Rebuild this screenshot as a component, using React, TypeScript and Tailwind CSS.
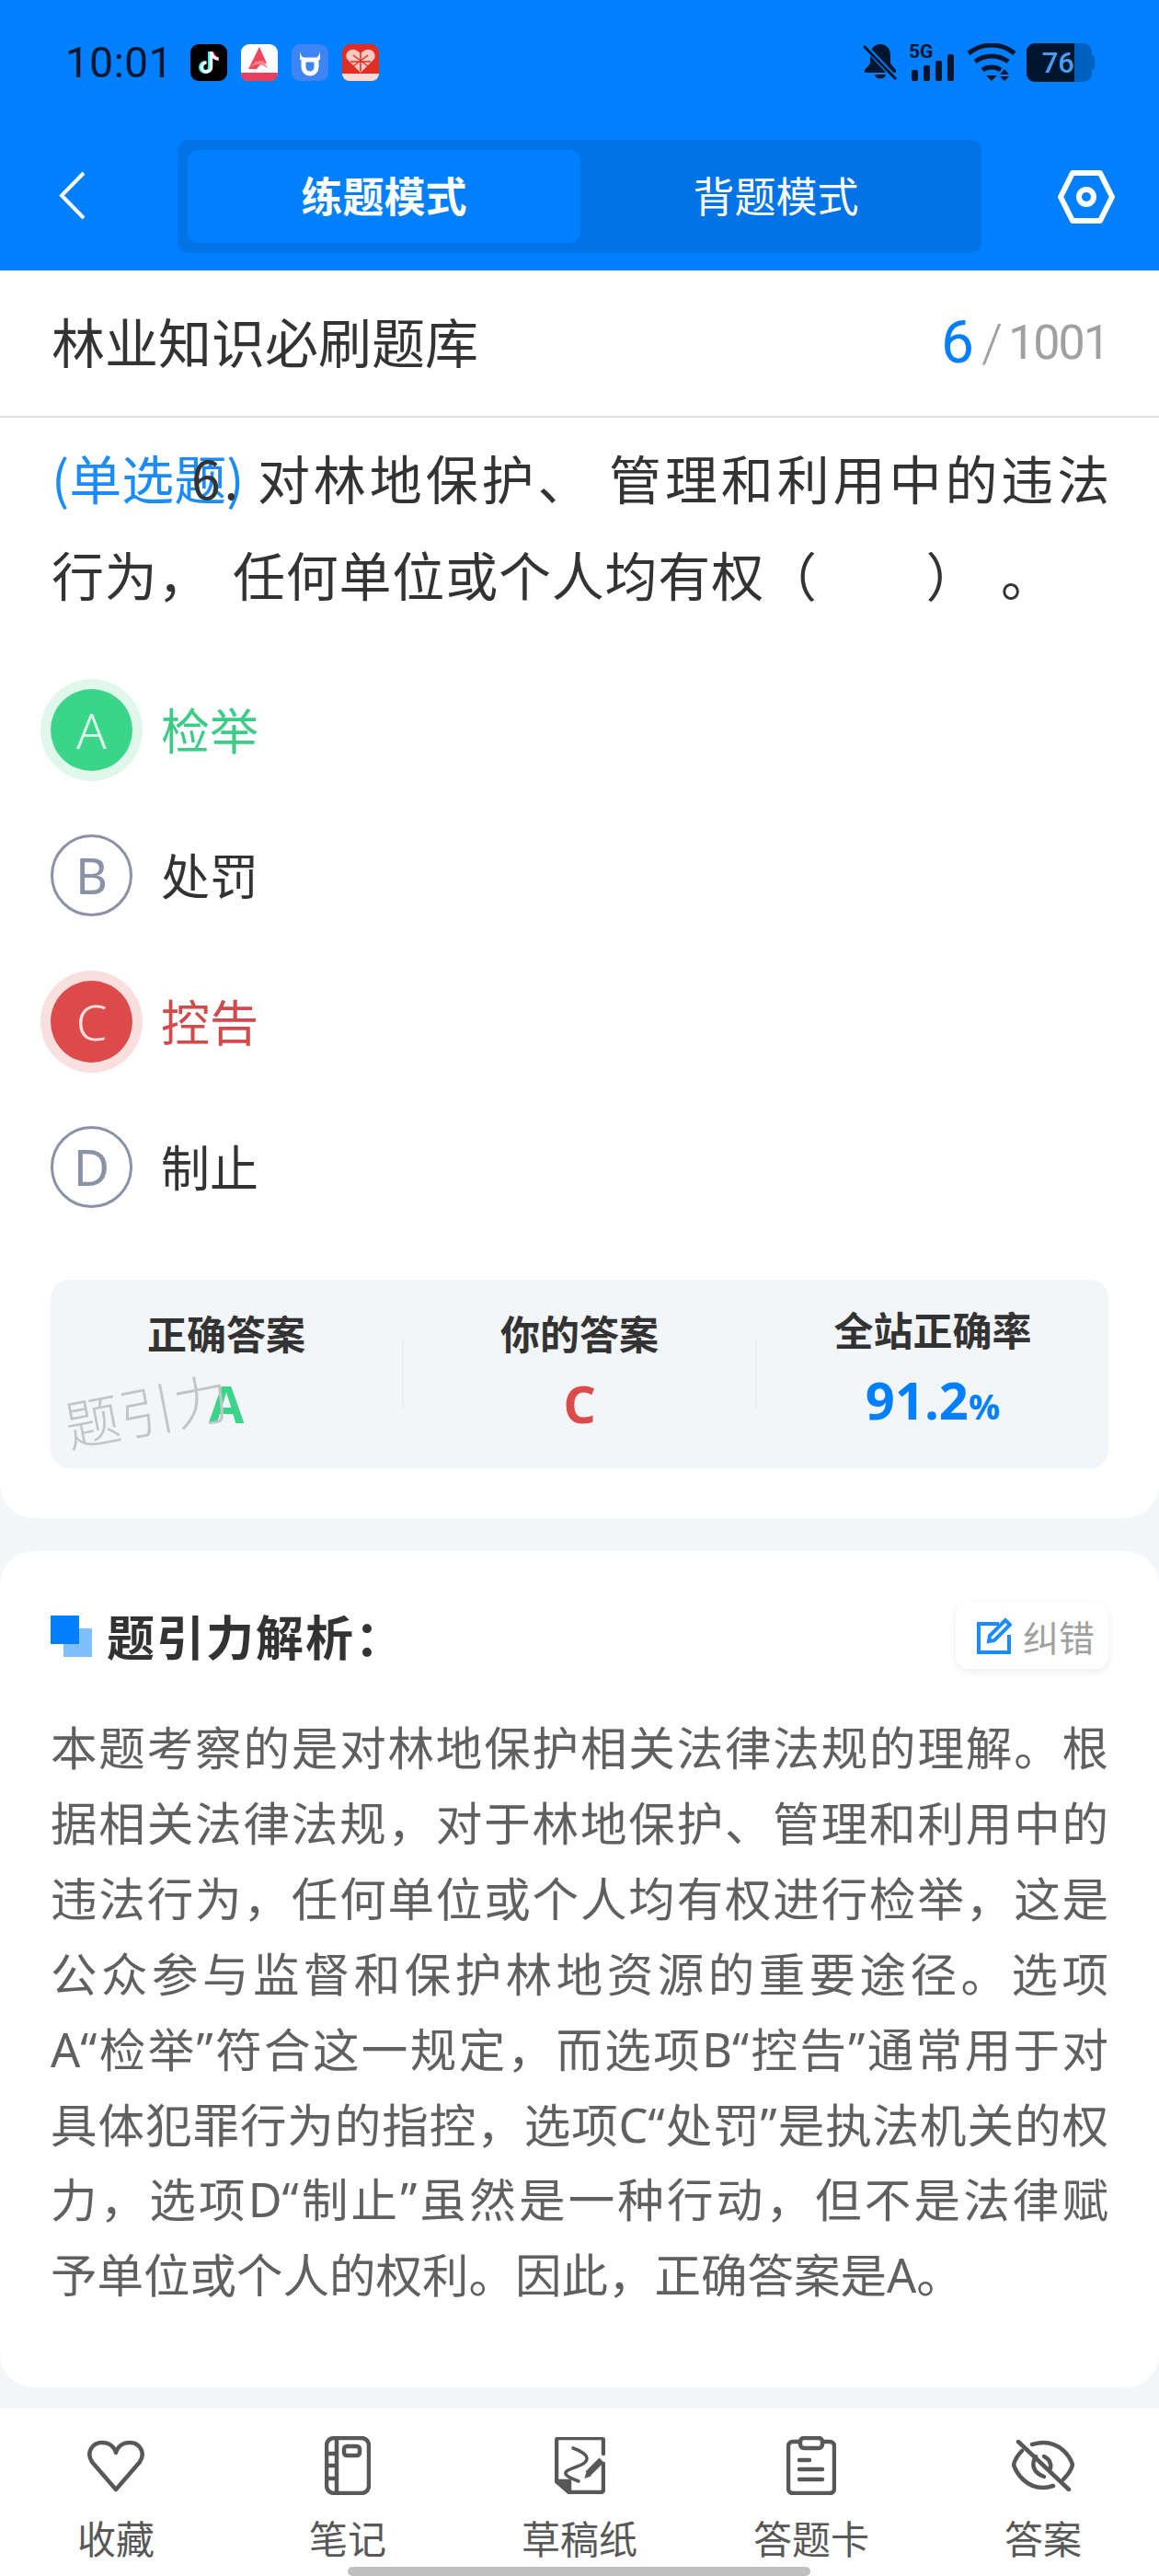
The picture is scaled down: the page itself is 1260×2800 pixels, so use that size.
import React from "react";

function Status() {
  return (
    <div className="flex h-[68px] items-center justify-between pl-[71px] pr-[70px] text-[#00162f]">
      <div className="flex items-center">
        <span className="w-[116px] font-['Roboto'] text-[46px] leading-none tracking-[0.5px]">10:01</span>
        <div className="ml-[20px] flex items-center gap-[15px]">
          <svg width="40" height="40" viewBox="0 0 40 40"><rect width="40" height="40" rx="9" fill="#000"/><path d="M21 8v17a5 5 0 1 1-5-5" fill="none" stroke="#25f4ee" strokeWidth="4"/><path d="M24 9c1 4 3 7 7 7" fill="none" stroke="#fe2c55" strokeWidth="4"/><path d="M22.500 8v17a5 5 0 1 1-5-5M22.500 8c1 5 4 8 8 8" fill="none" stroke="#fff" strokeWidth="3.500"/></svg>
          <svg width="40" height="40" viewBox="0 0 40 40"><rect width="40" height="40" rx="9" fill="#fff"/><path d="M0 31h40v1a8 8 0 0 1-8 8H8a8 8 0 0 1-8-8z" fill="#e73f5f"/><path d="M8 27L20 3l8 18-5-1-6 7z" fill="#f0455f"/><path d="M8 27c8-7 14-6 22 0l-6-9-8 1z" fill="#f5858f"/></svg>
          <svg width="40" height="40" viewBox="0 0 40 40"><rect width="40" height="40" rx="9" fill="#3f84f5"/><path d="M13 17v8a7 7 0 0 0 14 0v-8z" fill="none" stroke="#fff" strokeWidth="5"/><path d="M9 8c1 5 4 8 8 9H9zM31 8c-1 5-4 8-8 9h8z" fill="#fff"/></svg>
          <svg width="40" height="40" viewBox="0 0 40 40"><rect width="40" height="40" rx="9" fill="#e02e24"/><path d="M0 32h40a8 8 0 0 1-8 8H8a8 8 0 0 1-8-8z" fill="#fbd9d2"/><path d="M20 31L5 16c-3-7 5-13 11-9l4 3 4-3c6-4 14 2 11 9z" fill="#f9c9c2"/><path d="M20 10v20M9 19h22M12 12l16 12M28 12L12 24" stroke="#e02e24" strokeWidth="1.500"/></svg>
        </div>
      </div>
      <div className="flex items-center">
        <svg width="38" height="42" viewBox="0 0 38 42" fill="#00162f"><path d="M19 1c7 0 11 5 11 12v9l6 7v3H2v-3l6-7v-9C8 6 12 1 19 1zM13 34h12c-1 6-11 6-12 0z"/><path d="M1 2l35 37" stroke="#0080ff" strokeWidth="6"/><path d="M1 3l35 36" stroke="#00162f" strokeWidth="3"/></svg>
        <svg className="ml-[12px] overflow-visible" width="50" height="42" viewBox="0 0 50 42" fill="#00162f"><text x="0" y="16" fontSize="21" fontWeight="700" fontFamily="Roboto">5G</text><rect x="3" y="29" width="7" height="12" rx="2"/><rect x="16" y="24" width="7" height="17" rx="2"/><rect x="29" y="19" width="7" height="22" rx="2"/><rect x="42" y="12" width="7" height="29" rx="2"/></svg>
        <svg className="ml-[14px]" width="52" height="42" viewBox="0 0 52 42" fill="none" stroke="#00162f" strokeWidth="5"><path d="M1 11c15-12 35-12 50 0M8 20c11-8 25-8 36 0M16 29c6-4 14-4 20 0"/><path d="M20 35h12l-6 6z" fill="#00162f" stroke="none"/><path d="M40 28l5 6H35zM35 36h10l-5 5z" fill="#00162f" stroke="none"/></svg>
        <div className="ml-[12px] flex h-[42px] w-[71px] items-center overflow-hidden rounded-[9px] bg-[#0060bf]">
          <div className="flex h-full w-[52px] items-center justify-end bg-[#00162f] font-['Roboto'] text-[31px] font-medium leading-none text-[#4a9dee]">76</div>
        </div>
        <div className="h-[16px] w-[3px] rounded-r-[3px] bg-[#0060bf]" />
      </div>
    </div>
  );
}

function Header() {
  return (
    <div className="h-[294px] bg-[#0080ff] pt-[34px]">
      <Status />
      <div className="mt-[50px] flex items-start pl-[64px]">
        <svg className="mt-[34px]" width="29" height="53" viewBox="0 0 29 53" fill="none" stroke="#fff" strokeWidth="4"><path d="M27 2L3 26.500 27 51" /></svg>
        <div className="ml-[100px] flex h-[123px] w-[874px] rounded-[12px] bg-[#0073e6] p-[11px]">
          <div className="flex w-[427px] items-center justify-center rounded-[12px] bg-[#0080ff] pb-[3px] text-[45px] font-bold text-white">练题模式</div>
          <div className="flex flex-1 items-center justify-center pb-[3px] text-[45px] text-white">背题模式</div>
        </div>
        <svg className="ml-[83px] mt-[33px]" width="62" height="58" viewBox="0 0 62 58" fill="none" stroke="#fff" strokeWidth="6"><path d="M16 3h30l13 26-13 26H16L3 29z" strokeLinejoin="round"/><circle cx="31" cy="29" r="8"/></svg>
      </div>
    </div>
  );
}

function Option({ l, t, state }: { l: string; t: string; state?: "ok" | "bad" }) {
  const circle =
    state === "ok"
      ? "bg-[#3ad589] font-light text-[#e0f8ec] ring-[11px] ring-[#e0f8ec]"
      : state === "bad"
      ? "bg-[#dc4a4a] font-light text-[#fadfdf] ring-[11px] ring-[#fadfdf]"
      : "border-[3px] border-[#8a92a8] font-normal text-[#8a92a8]";
  const text = state === "ok" ? "text-[#3ecb88]" : state === "bad" ? "text-[#d24a4a]" : "text-[#333333]";
  return (
    <div className="flex h-[158.500px] items-center">
      <div className={`flex h-[89px] w-[89px] items-center justify-center rounded-full font-['Noto_Sans'] text-[54px] ${circle}`}>{l}</div>
      <span className={`ml-[31px] -translate-y-[1px] text-[53px] leading-none ${text}`}>{t}</span>
    </div>
  );
}

function Stat({ label, children }: { label: string; children: React.ReactNode }) {
  return (
    <div className="flex flex-1 flex-col items-center pb-[7px]">
      <div className="text-[43px] font-bold leading-[50px] text-[#333333]">{label}</div>
      <div className="mt-[19px] font-['Open_Sans'] text-[56px] font-bold leading-[66px]">{children}</div>
    </div>
  );
}

function Item({ icon, t }: { icon: React.ReactNode; t: string }) {
  return (
    <div className="flex w-[252px] flex-col items-center">
      <div className="flex h-[64px] items-center justify-center">{icon}</div>
      <div className="mt-[21px] text-[42px] leading-[50px] text-[#585858]">{t}</div>
    </div>
  );
}

const S = { fill: "none", stroke: "#585858", strokeWidth: 4.5, strokeLinecap: "round" as const, strokeLinejoin: "round" as const };

export default function App() {
  return (
    <div className="flex h-[2800px] w-[1260px] flex-col overflow-hidden bg-[#f2f6f9] font-['Noto_Sans_CJK_SC','Noto_Sans',sans-serif]">
      <Header />
      <div className="rounded-b-[36px] bg-white">
        <div className="flex h-[160px] items-center justify-between border-b-2 border-[#dedfe2] pl-[56px] pr-[55px]">
          <span className="-translate-y-[3px] text-[58px] leading-none text-[#333333]">林业知识必刷题库</span>
          <span className="flex items-center font-['Roboto'] leading-none">
            <span className="text-[64px] text-[#0080ff]">6</span>
            <span className="ml-[8px] text-[58px] font-light text-[#a0a0a0]">/</span>
            <span className="ml-[6px] text-[52px] tracking-[-2px] text-[#a0a0a0]">1001</span>
          </span>
        </div>
        <div className="relative whitespace-nowrap px-[56px] pt-[12px] text-[57px] leading-[105px] text-[#333333]">
          <span className="absolute left-[56px] top-[12px] text-[#1a8cff]">(单选题)</span>
          <div className="relative ml-[152px] tracking-[3.900px]">6. 对林地保护、 管理和利用中的违法</div>
          <div className="tracking-[0.800px] [word-spacing:10px]">行为， 任何单位或个人均有权（&nbsp;&nbsp;&nbsp;&nbsp;&nbsp;） 。</div>
        </div>
        <div className="pl-[55px] pt-[38px]">
          <Option l="A" t="检举" state="ok" />
          <Option l="B" t="处罚" />
          <Option l="C" t="控告" state="bad" />
          <Option l="D" t="制止" />
        </div>
        <div className="px-[55px] pb-[54px] pt-[43px]">
          <div className="relative flex h-[205px] items-center rounded-[20px] bg-[#f2f6f9]">
            <Stat label="正确答案"><span className="text-[#3ad589]">A</span></Stat>
            <div className="h-[73px] w-[2px] bg-[#e9edf0]" />
            <Stat label="你的答案"><span className="text-[#dc4a4a]">C</span></Stat>
            <div className="h-[73px] w-[2px] bg-[#e9edf0]" />
            <Stat label="全站正确率"><span className="text-[#0080ff]">91.2<span className="text-[38px]">%</span></span></Stat>
            <span className="absolute left-[14px] top-[110px] -rotate-[11deg] text-[60px] font-light leading-none text-[#c2c5c8]">题引力</span>
          </div>
        </div>
      </div>
      <div className="mt-[36px] h-[909px] rounded-[36px] bg-white px-[55px] pt-[56px]">
        <div className="flex h-[72px] items-center justify-between">
          <div className="flex items-center">
            <div className="relative h-[45px] w-[45px]">
              <div className="absolute bottom-0 right-0 h-[31px] w-[31px] bg-[#80bfff]" />
              <div className="absolute left-0 top-0 h-[31px] w-[31px] bg-[#0080ff]" />
            </div>
            <span className="ml-[16px] text-[52px] font-bold leading-none tracking-[2px] text-[#333333]">题引力解析：</span>
          </div>
          <div className="flex h-[72px] w-[166px] items-center justify-center rounded-[14px] bg-white pl-[8px] shadow-[0_3px_8px_rgba(0,0,0,0.08)]">
            <svg width="38" height="40" viewBox="0 0 38 40" fill="none" stroke="#1a8cff" strokeWidth="4"><path d="M24 7H2v31h33V19" /><path d="M14 20L31 3l5 5-17 17-6 1z" /></svg>
            <span className="ml-[12px] text-[39px] leading-none text-[#a0a0a0]">纠错</span>
          </div>
        </div>
        <p className="mt-[45px] text-justify font-['Noto_Sans','Noto_Sans_CJK_SC',sans-serif] text-[50.500px] leading-[81.900px] text-[#606060]">
          本题考察的是对林地保护相关法律法规的理解。根据相关法律法规，对于林地保护、管理和利用中的违法行为，任何单位或个人均有权进行检举，这是公众参与监督和保护林地资源的重要途径。选项A“检举”符合这一规定，而选项B“控告”通常用于对<span className="whitespace-nowrap">具体犯罪</span>行为的指控，选项C“处罚”是执法机关的权力，选项D“制止”虽然是一种行动，但不是法律赋<span className="whitespace-nowrap">予单位</span>或个人的权利。因此，正确答案是A。
        </p>
      </div>
      <div className="relative mt-[23px] flex-1 bg-white">
        <div className="flex justify-between pt-[30px]">
          <Item t="收藏" icon={<svg width="64" height="57" viewBox="0 0 64 57" {...S}><path d="M32 54L6 24C-1 13 7 3 17 3c7 0 13 4 15 11 2-7 8-11 15-11 10 0 18 10 11 21z" /></svg>} />
          <Item t="笔记" icon={<svg width="50" height="64" viewBox="0 0 50 64" {...S}><rect x="2" y="2" width="46" height="60" rx="8" /><path d="M13 2v60M2 19h11M2 32h11M2 46h11" /><rect x="21" y="11" width="17" height="10" rx="3" /></svg>} />
          <Item t="草稿纸" icon={<svg width="55" height="62" viewBox="0 0 55 62" {...S}><path d="M53 18V4a3 3 0 0 0-3-3H5a3 3 0 0 0-3 3v44l14 12h34a3 3 0 0 0 3-3V29" /><path d="M2 48h14v12z" fill="#585858" /><path d="M20 12c9 3 16 8 15 12-1 5-8 7-18 11-8 3-8 7 9 13" strokeWidth="3.500" /><path d="M36 40l15-15" strokeWidth="7" strokeLinecap="butt" /><path d="M33 44l2-6 4 4z" fill="#585858" strokeWidth="1" /></svg>} />
          <Item t="答题卡" icon={<svg width="54" height="64" viewBox="0 0 54 64" {...S}><path d="M14 6H7a5 5 0 0 0-5 5v46a5 5 0 0 0 5 5h40a5 5 0 0 0 5-5V11a5 5 0 0 0-5-5h-7" /><rect x="15" y="2" width="24" height="11" rx="4" /><path d="M14 26h11M14 36h25M14 47h25" /></svg>} />
          <Item t="答案" icon={<svg width="68" height="56" viewBox="0 0 68 56" {...S}><path d="M11 12C6 17 3 23 2 27c3 10 14 25 32 25 4 0 8-1 11-2M22 5c4-1 8-2 12-2 18 0 29 14 32 24-1 5-5 11-10 16" /><path d="M7 2l55 52M26 18c-4 6-5 17 9 22" /><path d="M42 31c1-5-1-10-7-13" /></svg>} />
        </div>
        <div className="absolute bottom-0 left-[378px] h-[10px] w-[503px] rounded-full bg-[#c0c0c0]" />
      </div>
    </div>
  );
}
